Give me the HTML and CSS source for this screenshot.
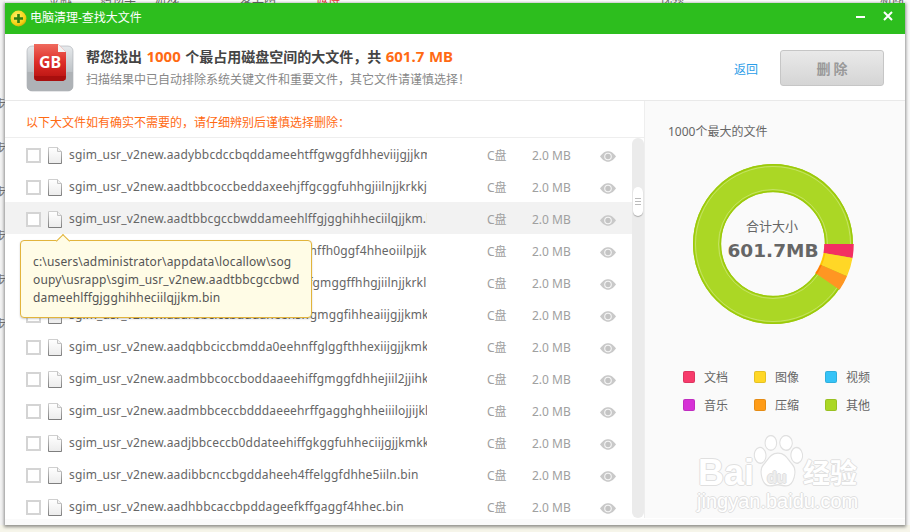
FILE: index.html
```html
<!DOCTYPE html>
<html lang="zh-CN">
<head>
<meta charset="utf-8">
<title>电脑清理-查找大文件</title>
<link rel="stylesheet" href="styles.css">
</head>
<body>
<div class="desk-top">
  <span class="dt dt-a">金融</span><span class="dt dt-b">购物车</span><span class="dt dt-c">游戏</span><span class="dt dt-d">爱上网</span><span class="dt dt-e">微博</span><span class="dt dt-f">视频</span><span class="dt dt-g">新闻</span>
</div>
<div class="desk-left">
  <span>步</span><span>步</span><span>步</span><span>步</span><span>步</span><span>步</span>
</div>
<div class="desk-right"></div>
<div class="desk-bottom"></div>

<main class="window">
  <header class="titlebar">
    <svg class="logo" viewBox="0 0 18 18" width="17" height="17">
      <defs><radialGradient id="lg" cx=".4" cy=".35" r=".75"><stop offset="0" stop-color="#fff36a"/><stop offset=".7" stop-color="#f4cf10"/><stop offset="1" stop-color="#b99a05"/></radialGradient></defs>
      <circle cx="9" cy="9" r="8.4" fill="url(#lg)"/>
      <path d="M7.6 4.2h2.8v3.4h3.4v2.8h-3.4v3.4H7.6v-3.4H4.2V7.6h3.4z" fill="#2f7f12"/>
    </svg>
    <span class="title">电脑清理-查找大文件</span>
    <span class="win-controls">
      <svg viewBox="0 0 12 12" width="12" height="12"><rect x="2" y="6" width="9" height="2" fill="#fff"/></svg>
      <svg viewBox="0 0 12 12" width="12" height="12"><path d="M2 2l8 8M10 2l-8 8" stroke="#fff" stroke-width="2" fill="none"/></svg>
    </span>
  </header>

  <section class="summary">
    <svg class="gb-icon" viewBox="0 0 48 50" width="48" height="50">
      <defs>
        <linearGradient id="tr" x1="0" y1="0" x2="0" y2="1"><stop offset="0" stop-color="#e6e9ec"/><stop offset=".55" stop-color="#bfc4c8"/><stop offset="1" stop-color="#82878b"/></linearGradient>
        <linearGradient id="rd" x1="0" y1="0" x2="0" y2="1"><stop offset="0" stop-color="#ef6a5e"/><stop offset=".5" stop-color="#de2e28"/><stop offset="1" stop-color="#b81210"/></linearGradient>
      </defs>
      <rect x="1" y="3" width="46" height="45" rx="5" fill="url(#tr)" stroke="#a9adb1" stroke-width=".6"/>
      <path d="M8 1h24l8 8v28H8z" fill="url(#rd)"/>
      <path d="M32 1l8 8h-8z" fill="#f4f4f4"/>
      <path d="M1 29h6l1 6c.3 2 1 3 3 3h26c2 0 2.700-1 3-3l1-6h6v14a5 5 0 0 1-5 5H6a5 5 0 0 1-5-5z" fill="#aeb2b6"/>
      <path d="M8 33h32l-1 3c-.4 1.500-1 2-3 2H12c-2 0-2.600-.5-3-2z" fill="#a80f0e"/>
      <text x="24" y="25" class="gb-text">GB</text>
    </svg>
    <div class="summary-text">
      <h1 class="headline">帮您找出 <em>1000</em> 个最占用磁盘空间的大文件，共 <em>601.7 MB</em></h1>
      <p class="subline">扫描结果中已自动排除系统关键文件和重要文件，其它文件请谨慎选择！</p>
    </div>
    <a class="back">返回</a>
    <button class="delete">删 除</button>
  </section>

  <div class="content">
    <section class="files">
      <p class="notice">以下大文件如有确实不需要的，请仔细辨别后谨慎选择删除：</p>
      <div class="list-wrap">
        <ul class="list">
          <li class="row"><i class="check"></i><svg class="file" viewBox="0 0 14 17"><use href="#fi"/></svg><span class="name">sgim_usr_v2new.aadybbcdccbqddameehtffgwggfdhheviijgjjkmk</span><span class="drive">C盘</span><span class="size">2.0 MB</span><svg class="eye" viewBox="0 0 16 11"><use href="#ey"/></svg></li>
          <li class="row"><i class="check"></i><svg class="file" viewBox="0 0 14 17"><use href="#fi"/></svg><span class="name">sgim_usr_v2new.aadtbbcoccbeddaxeehjffgcggfuhhgjiilnjjkrkkjp</span><span class="drive">C盘</span><span class="size">2.0 MB</span><svg class="eye" viewBox="0 0 16 11"><use href="#ey"/></svg></li>
          <li class="row hot"><i class="check"></i><svg class="file" viewBox="0 0 14 17"><use href="#fi"/></svg><span class="name">sgim_usr_v2new.aadtbbcgccbwddameehlffgjgghihheciilqjjkm.bin</span><span class="drive">C盘</span><span class="size">2.0 MB</span><svg class="eye" viewBox="0 0 16 11"><use href="#ey"/></svg></li>
          <li class="row"><i class="check"></i><svg class="file" viewBox="0 0 14 17"><use href="#fi"/></svg><span class="name">sgim_usr_v2new.aadkbbcnccbcddameeeehffh0ggf4hheoiilpjjk2kjk</span><span class="drive">C盘</span><span class="size">2.0 MB</span><svg class="eye" viewBox="0 0 16 11"><use href="#ey"/></svg></li>
          <li class="row"><i class="check"></i><svg class="file" viewBox="0 0 14 17"><use href="#fi"/></svg><span class="name">sgim_usr_v2new.aadobbcsccbeddaoeehtffgmggffhhgjiilnjjkrklkk</span><span class="drive">C盘</span><span class="size">2.0 MB</span><svg class="eye" viewBox="0 0 16 11"><use href="#ey"/></svg></li>
          <li class="row"><i class="check"></i><svg class="file" viewBox="0 0 14 17"><use href="#fi"/></svg><span class="name">sgim_usr_v2new.aadrbbciccbuddaneehsffgmggfihheaiijgjjkmk</span><span class="drive">C盘</span><span class="size">2.0 MB</span><svg class="eye" viewBox="0 0 16 11"><use href="#ey"/></svg></li>
          <li class="row"><i class="check"></i><svg class="file" viewBox="0 0 14 17"><use href="#fi"/></svg><span class="name">sgim_usr_v2new.aadqbbciccbmdda0eehnffglggfthhexiijgjjkmk</span><span class="drive">C盘</span><span class="size">2.0 MB</span><svg class="eye" viewBox="0 0 16 11"><use href="#ey"/></svg></li>
          <li class="row"><i class="check"></i><svg class="file" viewBox="0 0 14 17"><use href="#fi"/></svg><span class="name">sgim_usr_v2new.aadmbbcoccboddaaeehiffgmggfdhhejiil2jjihk</span><span class="drive">C盘</span><span class="size">2.0 MB</span><svg class="eye" viewBox="0 0 16 11"><use href="#ey"/></svg></li>
          <li class="row"><i class="check"></i><svg class="file" viewBox="0 0 14 17"><use href="#fi"/></svg><span class="name">sgim_usr_v2new.aadmbbceccbdddaeeehrffgagghghheiiilojjijkl</span><span class="drive">C盘</span><span class="size">2.0 MB</span><svg class="eye" viewBox="0 0 16 11"><use href="#ey"/></svg></li>
          <li class="row"><i class="check"></i><svg class="file" viewBox="0 0 14 17"><use href="#fi"/></svg><span class="name">sgim_usr_v2new.aadjbbceccb0ddateehiffgkggfuhheciijgjjkmkk</span><span class="drive">C盘</span><span class="size">2.0 MB</span><svg class="eye" viewBox="0 0 16 11"><use href="#ey"/></svg></li>
          <li class="row"><i class="check"></i><svg class="file" viewBox="0 0 14 17"><use href="#fi"/></svg><span class="name">sgim_usr_v2new.aadibbcnccbgddaheeh4ffelggfdhhe5iiln.bin</span><span class="drive">C盘</span><span class="size">2.0 MB</span><svg class="eye" viewBox="0 0 16 11"><use href="#ey"/></svg></li>
          <li class="row"><i class="check"></i><svg class="file" viewBox="0 0 14 17"><use href="#fi"/></svg><span class="name">sgim_usr_v2new.aadhbbcaccbpddageefkffgaggf4hhec.bin</span><span class="drive">C盘</span><span class="size">2.0 MB</span><svg class="eye" viewBox="0 0 16 11"><use href="#ey"/></svg></li>
        </ul>
        <div class="scrollbar"><div class="thumb"><i></i><i></i><i></i></div></div>
        <div class="tooltip">c:\users\administrator\appdata\locallow\sog<br>oupy\usrapp\sgim_usr_v2new.aadtbbcgccbwd<br>dameehlffgjgghihheciilqjjkm.bin</div>
      </div>
    </section>

    <aside class="side">
      <h2 class="side-title">1000个最大的文件</h2>
      <svg class="donut" viewBox="0 0 164 164" width="164" height="164">
        <circle cx="82" cy="82" r="66" fill="none" stroke="#abd725" stroke-width="28"/>
        <circle cx="82" cy="82" r="79.300" fill="none" stroke="#9bc90a" stroke-width="1.400"/>
        <circle cx="82" cy="82" r="52.500" fill="none" stroke="#9bc90a" stroke-width="1.400"/>
        <circle cx="82" cy="82" r="77.500" fill="none" stroke="#cbe675" stroke-width=".8"/>
        <circle cx="82" cy="82" r="54.500" fill="none" stroke="#cbe675" stroke-width=".8"/>
        <circle class="seg" cx="82" cy="82" r="66" pathLength="360" stroke="#f32f62" stroke-width="29.500" stroke-dasharray="10 350"/>
        <circle class="seg" cx="82" cy="82" r="66" pathLength="360" stroke="#ffd726" stroke-width="29.500" stroke-dasharray="13.600 346.400" stroke-dashoffset="-10"/>
        <circle class="seg" cx="82" cy="82" r="66" pathLength="360" stroke="#ff9622" stroke-width="29.500" stroke-dasharray="10.900 349.100" stroke-dashoffset="-23.600"/>
        <circle class="seg" cx="82" cy="82" r="52.500" pathLength="360" stroke="#ffc400" stroke-width="1.400" stroke-dasharray="13.600 346.400" stroke-dashoffset="-10"/>
        <circle class="seg" cx="82" cy="82" r="52.500" pathLength="360" stroke="#ff7a00" stroke-width="1.400" stroke-dasharray="10.900 349.100" stroke-dashoffset="-23.600"/>
        <text x="81" y="69" class="donut-label">合计大小</text>
        <text x="82" y="95" class="donut-value">601.7MB</text>
      </svg>
      <ul class="legend">
        <li><i class="sw sw-doc"></i>文档</li>
        <li><i class="sw sw-img"></i>图像</li>
        <li><i class="sw sw-vid"></i>视频</li>
        <li><i class="sw sw-mus"></i>音乐</li>
        <li><i class="sw sw-zip"></i>压缩</li>
        <li><i class="sw sw-oth"></i>其他</li>
      </ul>
    </aside>
  </div>
  <div class="statusbar"></div>

  <div class="watermark">
    <svg class="paw" viewBox="0 0 56 46" width="50" height="52" preserveAspectRatio="none">
      <g fill="#fff" stroke="#e0e0e0" stroke-width="1.200">
        <ellipse cx="8" cy="18" rx="6.500" ry="7" transform="rotate(-12 8 18)"/>
        <ellipse cx="20" cy="7" rx="6.500" ry="6.500"/>
        <ellipse cx="37" cy="7" rx="7" ry="6.500" transform="rotate(8 37 7)"/>
        <ellipse cx="49" cy="18" rx="6.500" ry="7" transform="rotate(-14 49 18)"/>
        <path d="M28 16c9 0 11 6 16 10 6 5 2 19-7 19-4 0-6-1-9-1s-5 1-9 1c-9 0-13-14-7-19 5-4 7-10 16-10z"/>
      </g>
    </svg>
    <span class="wm-bai">Bai</span>
    <span class="wm-du">du</span>
    <span class="wm-cn">经验</span>
    <span class="wm-url">jingyan.baidu.com</span>
  </div>
</main>

<svg class="defs" width="0" height="0">
  <defs>
    <linearGradient id="fg" x1="0" y1="0" x2="0" y2="1"><stop offset="0" stop-color="#fff"/><stop offset="1" stop-color="#ececec"/></linearGradient>
    <linearGradient id="fs" x1="0" y1="0" x2="0" y2="1"><stop offset="0" stop-color="#cfcfcf"/><stop offset="1" stop-color="#7e7e7e"/></linearGradient>
    <g id="fi"><path d="M.5.5h9l4 4v12H.5z" fill="url(#fg)" stroke="url(#fs)"/><path d="M9.500.5v4h4" fill="#f2f2f2" stroke="#c4c4c4"/></g>
    <g id="ey"><path d="M0 5.500C3 1.500 5.500.3 8 .3s5 1.200 8 5.200c-3 4-5.500 5.200-8 5.200S3 9.500 0 5.500z" fill="#c9c9c9"/><circle cx="8" cy="5.500" r="3.800" fill="#f6f6f6"/><circle cx="8" cy="5.500" r="2.700" fill="#c4c4c4"/></g>
  </defs>
</svg>
</body>
</html>
```

FILE: styles.css
```css
* { box-sizing: border-box; }
html, body { margin: 0; padding: 0; }
body {
  position: relative;
  width: 910px;
  height: 532px;
  overflow: hidden;
  background: #f7f7f2;
  font-family: "Noto Sans", "Noto Sans CJK SC", sans-serif;
  color: #555;
}
ul { list-style: none; margin: 0; padding: 0; }
h1, h2, p { margin: 0; font-weight: normal; }
em { font-style: normal; }
.defs { position: absolute; }

/* desktop behind the window */
.desk-top {
  position: absolute; left: 0; top: 0; width: 910px; height: 3px;
  background: #fff; overflow: hidden;
}
.dt { position: absolute; bottom: -3px; font-size: 12px; line-height: 14px; color: #666; white-space: nowrap; }
.dt-a { left: 48px; } .dt-b { left: 100px; } .dt-c { left: 155px; }
.dt-d { left: 240px; } .dt-e { left: 316px; color: #e33; } .dt-f { left: 660px; } .dt-g { left: 880px; }
.desk-left {
  position: absolute; left: 0; top: 0; width: 5px; height: 532px;
  background: #f3f3f3; overflow: hidden;
  display: flex; flex-direction: column; gap: 30px; padding-top: 98px;
  font-size: 12px; color: #777;
}
.desk-left span { margin-left: -6px; line-height: 14px; }
.desk-right { position: absolute; right: 0; top: 0; width: 5px; height: 532px; background: #f9f9f9; }
.desk-bottom { position: absolute; left: 0; bottom: 0; width: 910px; height: 7px; background: #f6f5ea; }

/* window */
.window {
  position: absolute; left: 5px; top: 3px;
  width: 900px; height: 522px;
  display: flex; flex-direction: column;
  background: #fff;
  box-shadow: 0 1px 3px 1px rgba(60, 60, 60, .55);
}
.titlebar {
  flex: none; height: 31px;
  display: flex; align-items: center;
  padding: 0 11px 0 5px;
  background: #2dbe1e;
  color: #fff;
}
.logo { flex: none; margin-right: 3px; margin-top: -1px; }
.title { font-size: 12px; line-height: 16px; margin-top: -1px; }
.win-controls { margin-left: auto; display: flex; gap: 16px; margin-top: -6px; }

.summary {
  flex: none; height: 67px;
  display: flex; align-items: flex-start;
  padding: 9px 21px 0 21px;
  border-bottom: 1px solid #e9e9e9;
}
.gb-icon { flex: none; }
.gb-text { font: bold 16px "Noto Sans", sans-serif; fill: #fff; text-anchor: middle; }
.summary-text { margin-left: 12px; padding-top: 3px; }
.headline { font-size: 14px; line-height: 20px; font-weight: bold; color: #444; white-space: nowrap; word-spacing: .8px; }
.headline em { font-size: 15px; color: #ff6a13; }
.subline { font-size: 12px; line-height: 18px; margin-top: 4px; color: #888; white-space: nowrap; }
.back { margin-left: auto; margin-top: 18px; font-size: 12px; line-height: 18px; color: #2b9de8; }
.delete {
  flex: none; margin-left: 22px; margin-top: 7px;
  width: 104px; height: 36px; padding: 0;
  border: 1px solid #c6c6c6; border-radius: 3px;
  background: linear-gradient(#e9e9e9, #d5d5d5);
  font: bold 14px "Noto Sans CJK SC", sans-serif; color: #999;
}

.content { flex: 1; min-height: 0; display: flex; }
.files { flex: none; width: 639px; display: flex; flex-direction: column; }
.notice { flex: none; height: 36px; padding: 13px 0 0 21px; font-size: 12px; line-height: 18px; color: #ff6a13; }
.list-wrap { position: relative; flex: 1; min-height: 0; display: flex; border-top: 1px solid #eee; }
.list { flex: 1; min-width: 0; overflow: hidden; }
.row { height: 32px; display: flex; align-items: center; padding: 2px 0 0 21px; }
.hot { background: #f2f2f2; }
.check { flex: none; width: 15px; height: 15px; border: 2px solid #d4d4d4; background: #fff; }
.file { flex: none; width: 14px; height: 17px; margin-left: 7px; }
.name {
  flex: none; width: 358px; margin-left: 7px; overflow: hidden; white-space: nowrap;
  font-size: 12px; line-height: 18px; color: #666; letter-spacing: .16px;
}
.drive { flex: none; width: 45px; margin-left: 60px; font-size: 12px; color: #a0a0a0; }
.size { flex: none; width: 68px; font-size: 12px; color: #a0a0a0; }
.eye { flex: none; width: 16px; height: 11px; margin-top: 2px; }
.scrollbar {
  position: relative; flex: none; width: 12px;
  background: #ebebeb; border-radius: 6px;
}
.thumb {
  position: absolute; left: 1px; top: 49px; width: 10px; height: 29px;
  background: #fff; border-radius: 5px; box-shadow: 0 1px 1px #aaa;
  display: flex; flex-direction: column; justify-content: center; align-items: center; gap: 2px;
}
.thumb i { width: 6px; height: 1px; background: #bbb; }
.tooltip {
  position: absolute; left: 15px; top: 102px;
  width: 292px; height: 78px; padding: 12px 0 0 12px;
  background: #fffce6; border: 1px solid #e2b43c; border-radius: 4px;
  box-shadow: 0 1px 2px rgba(0,0,0,.2);
  font-size: 12px; line-height: 18px; color: #555; white-space: nowrap; letter-spacing: .16px;
}
.tooltip::before {
  content: ""; position: absolute; left: 37px; top: -5px;
  width: 9px; height: 9px; background: #fffce6;
  border-left: 1px solid #e2b43c; border-top: 1px solid #e2b43c;
  transform: rotate(45deg);
}

.side { flex: 1; background: #fafafa; border-left: 1px solid #eee; padding: 21px 0 0 23px; }
.side-title { font-size: 12px; line-height: 20px; color: #666; }
.donut { display: block; margin: 20px 0 0 23px; overflow: visible; }
.seg { fill: none; }
.donut-label { font: 13px "Noto Sans CJK SC", sans-serif; fill: #666; text-anchor: middle; }
.donut-value { font: bold 18.500px "DejaVu Sans", sans-serif; fill: #666; text-anchor: middle; }
.legend { display: grid; grid-template-columns: repeat(3, 71px); row-gap: 10px; margin: 42px 0 0 15px; }
.legend li { display: flex; align-items: center; height: 18px; font-size: 12px; color: #666; }
.sw { width: 12px; height: 12px; border-radius: 2px; margin-right: 9px; border: 1px solid rgba(0,0,0,.1); }
.sw-doc { background: #f73b6b; } .sw-img { background: #ffd726; } .sw-vid { background: #35c3f7; }
.sw-mus { background: #d631d6; } .sw-zip { background: #ff9c17; } .sw-oth { background: #abd725; }

.statusbar { flex: none; height: 7px; background: #fafafa; border-top: 1px solid #fff; }

.watermark {
  position: absolute; left: 691px; top: 430px; width: 170px; height: 82px;
  color: #fff;
}
.paw { position: absolute; left: 57px; top: 2px; }
.wm-bai, .wm-du, .wm-cn, .wm-url {
  position: absolute; white-space: nowrap;
  text-shadow: -1px 0 #e0e0e0, 1px 0 #e0e0e0, 0 -1px #e0e0e0, 0 1px #e0e0e0;
}
.wm-bai { left: 2px; top: 22px; font: bold 36px/36px "Liberation Sans", sans-serif; }
.wm-du { left: 71px; top: 36px; font: bold 16px/18px "Liberation Sans", sans-serif; color: #eee; }
.wm-cn { left: 107px; top: 24px; font: bold 27px/30px "Noto Sans CJK SC", sans-serif; }
.wm-url { left: 1px; top: 58px; font: 20px/20px "Liberation Sans", sans-serif; }
```
